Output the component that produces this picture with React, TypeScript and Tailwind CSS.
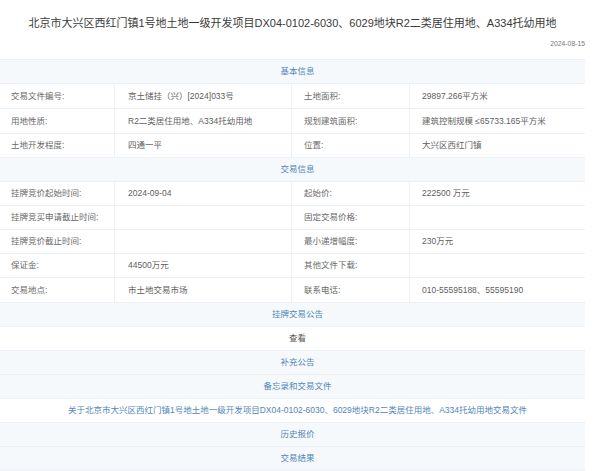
import React from "react";

const font = { fontFamily: '"Liberation Sans", "Noto Sans CJK SC", sans-serif' };

function SectionHeader({ text, h = "h-[24px]" }: { text: string; h?: string }) {
  return (
    <div className={`${h} flex items-center justify-center pl-[10px] bg-[#f6f9fc] border-b border-[#edf0f4] text-[8.5px] text-[#5286b8]`}>
      {text}
    </div>
  );
}

function FullRow({ text, white, color }: { text: string; white?: boolean; color: string }) {
  return (
    <div
      className={`h-[24px] flex items-center justify-center pl-[10px] border-b border-[#edf0f4] text-[8.5px] ${white ? "bg-white" : "bg-[#f6f9fc]"}`}
      style={{ color }}
    >
      {text}
    </div>
  );
}

function Row({ cells, h }: { cells: string[]; h: string }) {
  return (
    <div className={`grid grid-cols-[115px_177px_118px_175px] ${h} border-b border-[#edf0f4] text-[8.5px] text-[#6a6a6a]`}>
      <div className="flex items-center pl-[11px] border-r border-[#edf0f4]">{cells[0]}</div>
      <div className="flex items-center pl-[13px] border-r border-[#edf0f4] text-[#5e5e5e]">{cells[1]}</div>
      <div className="flex items-center pl-[12px] border-r border-[#edf0f4]">{cells[2]}</div>
      <div className="flex items-center pl-[12px] text-[#5e5e5e]">{cells[3]}</div>
    </div>
  );
}

export default function App() {
  return (
    <div className="w-[599px] h-[471px] bg-white overflow-hidden" style={font}>
      <div className="w-[585px]">
        <div className="h-[59px] relative">
          <div className="pt-[15px] text-center text-[11px] text-[#3a3a3a] leading-[16px]">
            北京市大兴区西红门镇1号地土地一级开发项目DX04-0102-6030、6029地块R2二类居住用地、A334托幼用地
          </div>
          <div className="absolute right-0 top-[39px] text-[6.8px] text-[#777] leading-[10px]">2024-08-15</div>
        </div>
        <div className="border-t border-[#edf0f4]">
          <SectionHeader text="基本信息" h="h-[24px]" />
          <Row h="h-[25px]" cells={["交易文件编号:", "京土储挂（兴）[2024]033号", "土地面积:", "29897.266平方米"]} />
          <Row h="h-[25px]" cells={["用地性质:", "R2二类居住用地、A334托幼用地", "规划建筑面积:", "建筑控制规模 ≤65733.165平方米"]} />
          <Row h="h-[24px]" cells={["土地开发程度:", "四通一平", "位置:", "大兴区西红门镇"]} />
          <SectionHeader text="交易信息" />
          <Row h="h-[24px]" cells={["挂牌竞价起始时间:", "2024-09-04", "起始价:", "222500 万元"]} />
          <Row h="h-[24px]" cells={["挂牌竞买申请截止时间:", "", "固定交易价格:", ""]} />
          <Row h="h-[24px]" cells={["挂牌竞价截止时间:", "", "最小递增幅度:", "230万元"]} />
          <Row h="h-[24px]" cells={["保证金:", "44500万元", "其他文件下载:", ""]} />
          <Row h="h-[25px]" cells={["交易地点:", "市土地交易市场", "联系电话:", "010-55595188、55595190"]} />
          <FullRow text="挂牌交易公告" color="#5286b8" />
          <FullRow text="查看" white color="#555" />
          <FullRow text="补充公告" color="#5286b8" />
          <FullRow text="备忘录和交易文件" color="#5286b8" />
          <FullRow
            text="关于北京市大兴区西红门镇1号地土地一级开发项目DX04-0102-6030、6029地块R2二类居住用地、A334托幼用地交易文件"
            white
            color="#5286b8"
          />
          <FullRow text="历史报价" color="#5286b8" />
          <FullRow text="交易结果" color="#5286b8" />
        </div>
      </div>
    </div>
  );
}
